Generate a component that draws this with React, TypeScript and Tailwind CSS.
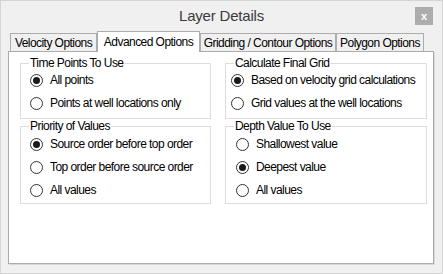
type Option = { label: string; checked?: boolean }

const timePoints: Option[] = [
  { label: 'All points', checked: true },
  { label: 'Points at well locations only' },
]
const priority: Option[] = [
  { label: 'Source order before top order', checked: true },
  { label: 'Top order before source order' },
  { label: 'All values' },
]
const finalGrid: Option[] = [
  { label: 'Based on velocity grid calculations', checked: true },
  { label: 'Grid values at the well locations' },
]
const depth: Option[] = [
  { label: 'Shallowest value' },
  { label: 'Deepest value', checked: true },
  { label: 'All values' },
]

const tabs = [
  { label: 'Velocity Options', width: 'w-[87px]' },
  { label: 'Advanced Options', width: 'w-[103px]', active: true },
  { label: 'Gridding / Contour Options', width: 'w-[136px]' },
  { label: 'Polygon Options', width: 'w-[88px]' },
]

function Radio({ checked }: { checked?: boolean }) {
  return (
    <span className="flex h-[13px] w-[13px] shrink-0 items-center justify-center rounded-full border border-[#333333] bg-white">
      {checked && <span className="h-[7px] w-[7px] rounded-full bg-[#1a1a1a]" />}
    </span>
  )
}

function Group({
  title,
  options,
  className,
  padLeft,
}: {
  title: string
  options: Option[]
  className: string
  padLeft: string
}) {
  return (
    <div className={`relative border border-[#dcdcdc] ${className}`}>
      {/* legend sits on the top border */}
      <span className="absolute -top-[8px] left-[8px] whitespace-nowrap bg-white px-[1px] text-[12px] leading-[14px] tracking-[-0.55px] text-black">
        {title}
      </span>
      <div className={`flex flex-col gap-[1px] ${padLeft}`}>
        {options.map((o) => (
          <div key={o.label} className="flex h-[22px] items-center gap-[7px]">
            <Radio checked={o.checked} />
            <span className="whitespace-nowrap text-[12px] tracking-[-0.55px] text-black">{o.label}</span>
          </div>
        ))}
      </div>
    </div>
  )
}

export default function App() {
  return (
    <div className="flex h-[274px] w-[443px] flex-col border border-[#d4d4d4] bg-[#f0f0f0] font-['Liberation_Sans',Arial,sans-serif]">
      {/* Title bar */}
      <div className="relative flex h-[30px] shrink-0 items-center justify-center">
        <span className="text-[15px] tracking-[-0.2px] text-[#3a3a3a]">Layer Details</span>
        <div className="absolute right-[9px] top-[6px] flex h-[18px] w-[18px] items-center justify-center bg-[#adadad] text-[11px] font-bold leading-none text-white">
          x
        </div>
      </div>

      {/* Tabs */}
      <div className="relative z-10 flex h-[20px] shrink-0 items-end pl-[9px]">
        {tabs.map((t) =>
          t.active ? (
            <div
              key={t.label}
              className={`${t.width} -mb-px flex h-[21px] items-center justify-center whitespace-nowrap border border-b-0 border-[#acacac] bg-white text-[12px] tracking-[-0.55px] text-black`}
            >
              {t.label}
            </div>
          ) : (
            <div
              key={t.label}
              className={`${t.width} flex h-[18px] items-center justify-center whitespace-nowrap border border-b-0 border-[#acacac] bg-[#f0f0f0] text-[12px] tracking-[-0.55px] text-black`}
            >
              {t.label}
            </div>
          ),
        )}
      </div>

      {/* Tab panel */}
      <div className="ml-[7px] flex h-[213px] w-[426px] gap-[14px] border border-[#acacac] bg-white pl-[11px] pt-[11px] shadow-[1px_1px_0_#d8d8d8]">
        <div className="flex w-[191px] flex-col gap-[7px]">
          <Group title="Time Points To Use" options={timePoints} className="h-[56px] pt-[5px]" padLeft="pl-[9px]" />
          <Group title="Priority of Values" options={priority} className="h-[78px] pt-[6px]" padLeft="pl-[9px]" />
        </div>
        <div className="flex w-[202px] flex-col gap-[7px]">
          <Group title="Calculate Final Grid" options={finalGrid} className="h-[56px] pt-[5px]" padLeft="pl-[5px]" />
          <Group title="Depth Value To Use" options={depth} className="h-[78px] pt-[6px]" padLeft="pl-[10px]" />
        </div>
      </div>
    </div>
  )
}
